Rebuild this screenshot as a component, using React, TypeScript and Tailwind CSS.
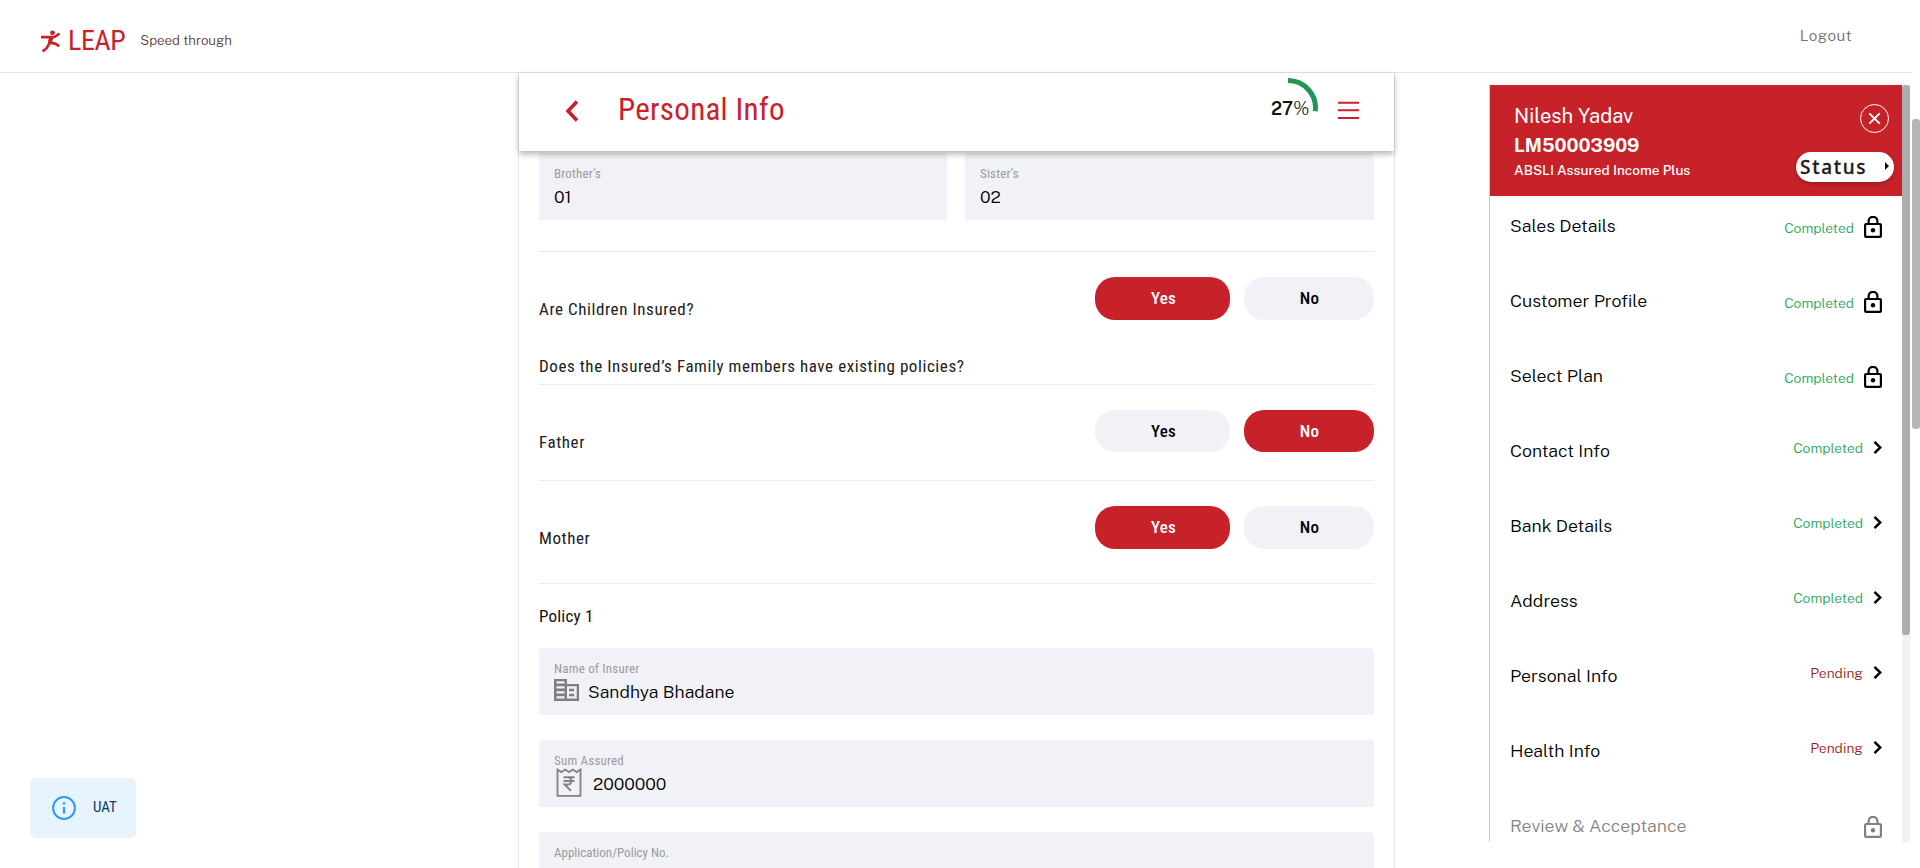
import type { ReactNode } from 'react';

const din = "font-['Roboto_Condensed',Roboto,sans-serif]";
const sans = "font-['Public_Sans',Inter,sans-serif]";

function Lock({ muted }: { muted?: boolean }) {
  return (
    <svg width="18" height="22" viewBox="0 0 18 22" fill="none" className={muted ? 'text-[#808080]' : 'text-black'}>
      <rect x="1.1" y="8" width="15.8" height="12.900" rx="1" stroke="currentColor" strokeWidth="2.200" />
      <path d="M4.6 8V5.2a4.4 4.4 0 0 1 8.8 0V8" stroke="currentColor" strokeWidth="2.200" />
      <circle cx="9" cy="14.3" r="2.2" fill="currentColor" />
    </svg>
  );
}

function Chevron() {
  return (
    <svg width="9" height="13" viewBox="0 0 9 13" fill="none" stroke="#000" strokeWidth="2.5">
      <path d="M1.500 .900l5.800 5.600-5.800 5.600" />
    </svg>
  );
}

function Choice({ value, h }: { value: 'Yes' | 'No'; h: string }) {
  const on = 'bg-[#c7222a] text-white';
  const off = 'bg-[#f1f2f7] text-black';
  return (
    <div className={`flex gap-[14px] text-[17px] font-medium tracking-[0.3px] ${h}`}>
      <button className={`w-[135px] rounded-[20px] pl-[2px] pt-px ${value === 'Yes' ? on : off}`}>Yes</button>
      <button className={`w-[130px] rounded-[20px] pl-px pt-px ${value === 'No' ? on : off}`}>No</button>
    </div>
  );
}

function Question({ label, value, height, btn = 'h-[43px]' }: { label: string; value: 'Yes' | 'No'; height: string; btn?: string }) {
  return (
    <div className={`flex items-start justify-between border-t border-[#ebebeb] pt-[25px] ${height}`}>
      <span className="pt-[22px] text-[17px] leading-[20px] tracking-[0.58px] text-[#212121]">{label}</span>
      <Choice value={value} h={btn} />
    </div>
  );
}

function Field({ label, value, icon, width, tight }: { label: string; value?: string; icon?: ReactNode; width: string; tight?: boolean }) {
  return (
    <div className={`flex h-[67px] flex-col rounded-t-[4px] bg-[#f1f2f7] pl-[15px] pt-[13px] ${width}`}>
      <span className={`h-[16px] text-[13px] leading-[16px] text-[#9b9b9b] ${tight ? 'tracking-normal' : 'tracking-[0.2px]'}`}>{label}</span>
      <div className="flex h-[30px] items-start">
        {icon}
        <span className={`pt-[4px] text-[17.6px] font-[360] leading-[21px] text-black ${sans}`}>{value}</span>
      </div>
    </div>
  );
}

function Building() {
  return (
    <svg width="25" height="22" viewBox="0 0 25 22" className="mr-[9px] mt-[2px]">
      <path fill="#7d807f" d="M0 0h13v5h12v17H0z" />
      <path fill="#f1f2f7" d="M2.500 2.200h8v2.300h-8zM2.500 7.200h8v2.300h-8zM2.500 12.200h8v2.300h-8zM2.500 17.200h8v2.300h-8zM13 7.300h9.700v12.300H13z" />
      <path fill="#7d807f" d="M15 9.800h5.200v2.400H15zM15 14.800h5.200v2.400H15z" />
    </svg>
  );
}

function Receipt() {
  return (
    <svg width="26" height="30" viewBox="0 0 26 30" className="ml-[2px] mr-[11px] mt-[-1px]" fill="none" stroke="#808285" strokeWidth="1.8">
      <path d="M1.500 1.500v26.300h23V1.500l-3.800 2.600-3.900-2.600L13 4.100 9.200 1.500 5.400 4.100z" />
      <path d="M7.500 9.300h11M7.500 13h11M8 9.300h3.500c5 0 5 7.200 0 7.200H8.500l6.500 6.300" strokeWidth="1.900" />
    </svg>
  );
}

type Step = { name: string; status?: string; icon: 'lock' | 'arrow' };
const steps: Step[] = [
  { name: 'Sales Details', status: 'Completed', icon: 'lock' },
  { name: 'Customer Profile', status: 'Completed', icon: 'lock' },
  { name: 'Select Plan', status: 'Completed', icon: 'lock' },
  { name: 'Contact Info', status: 'Completed', icon: 'arrow' },
  { name: 'Bank Details', status: 'Completed', icon: 'arrow' },
  { name: 'Address', status: 'Completed', icon: 'arrow' },
  { name: 'Personal Info', status: 'Pending', icon: 'arrow' },
  { name: 'Health Info', status: 'Pending', icon: 'arrow' },
  { name: 'Review & Acceptance', icon: 'lock' },
];

export default function App() {
  return (
    <div className={`relative flex h-[868px] w-[1920px] flex-col overflow-hidden bg-white ${din}`}>
      <header className="flex h-[73px] w-[1912px] shrink-0 items-start border-b border-[#e3e3e8] pl-[40px]">
        <svg width="21" height="23" viewBox="0 0 21 23" className="mt-[30px]" fill="none" stroke="#c7222a">
          <circle cx="12.500" cy="2.800" r="2.400" fill="#c7222a" stroke="none" />
          <path d="M1 7.200h11l2.500-.200 5-3.500M10.500 7l-1.500 6.500c-.800 3-3 6-6.500 7.700M10 12.800c4 0 7 .700 9 3.700M12 8l-2 5" strokeWidth="2.700" />
        </svg>
        <span className="ml-[7px] mt-[25px] text-[28px] leading-[32px] tracking-[-0.4px] text-[#c7222a]">LEAP</span>
        <span className={`ml-[15px] mt-[32px] text-[13.300px] font-[350] leading-[16px] text-[#5d3a38] ${sans}`}>Speed through</span>
        <span className={`ml-auto mr-[60px] mt-[26px] text-[15.200px] font-light leading-[20px] tracking-[0.5px] text-[#6f6f6f] ${sans}`}>Logout</span>
      </header>

      <div className="flex min-h-0 flex-1 items-start">
        <main className="ml-[518px] h-full w-[877px] shrink-0 border-x border-[#e8e8e8]">
          <div className="relative z-10 flex h-[78px] items-start bg-white shadow-[0_3px_6px_rgba(0,0,0,0.3)]">
            <svg width="14" height="22" viewBox="0 0 14 22" className="ml-[46px] mt-[27px]" fill="none" stroke="#c7222a" strokeWidth="3.600">
              <path d="M12 1.500l-9 9.500 9 9.500" />
            </svg>
            <h1 className="ml-[39px] mt-[19px] text-[31px] leading-[36px] tracking-[0.300px] text-[#c7222a]">Personal Info</h1>
            <div className="relative ml-auto h-[60px] w-[60px] pt-[25px]">
              <svg width="60" height="60" viewBox="0 0 60 60" className="absolute left-0 top-[5px]" fill="none" stroke="#219653" strokeWidth="5">
                <path d="M30 2.500A27.500 27.500 0 0 1 57.300 33.300" />
              </svg>
              <p className={`ml-[13px] text-[18px] font-[350] leading-[22px] text-[#111] ${sans}`}>
                <span className="font-semibold">27</span>%
              </p>
            </div>
            <svg width="21" height="18" viewBox="0 0 21 18" className="ml-[20px] mr-[35px] mt-[28px]" stroke="#c7222a" strokeWidth="2">
              <path d="M0 1.700h21M0 9.300h21M0 17h21" />
            </svg>
          </div>

          <div className="flex flex-col pl-[20px] pr-[20px] pt-[2px]">
            <div className="flex justify-between">
              <Field label="Brother's" value="01" width="w-[408px]" />
              <Field label="Sister's" value="02" width="w-[409px]" />
            </div>
            <div className="h-[31px]" />
            <Question label="Are Children Insured?" value="Yes" height="h-[105px]" />
            <p className="h-[28px] text-[17px] leading-[20px] tracking-[0.580px] text-[#212121]">
              Does the Insured’s Family members have existing policies?
            </p>
            <Question label="Father" value="No" height="h-[96px]" btn="h-[42px]" />
            <Question label="Mother" value="Yes" height="h-[103px]" />
            <p className="h-[65px] border-t border-[#ebebeb] pt-[22px] text-[17px] leading-[20px] tracking-[0.200px] text-[#111]">Policy 1</p>
            <div className="flex flex-col gap-[25px]">
              <Field label="Name of Insurer" value="Sandhya Bhadane" icon={<Building />} width="w-full" />
              <Field label="Sum Assured" value="2000000" icon={<Receipt />} width="w-full" />
              <Field label="Application/Policy No." width="w-full" tight />
            </div>
          </div>
        </main>

        <aside className={`ml-[94px] mt-[12px] flex h-[757px] w-[421px] shrink-0 overflow-hidden border-l border-[#ccc] ${sans}`}>
          <div className="w-[412px] shrink-0">
            <div className="flex h-[111px] justify-between bg-[#c7222a] pl-[24px] text-white">
              <div className="flex flex-col whitespace-nowrap pt-[19px]">
                <span className="text-[20.200px] leading-[24px]">Nilesh Yadav</span>
                <span className="mt-[5px] text-[18.700px] font-bold leading-[24px]">LM50003909</span>
                <span className="mt-[4px] text-[13.600px] font-medium leading-[18px]">ABSLI Assured Income Plus</span>
              </div>
              <div className="flex flex-col items-end pt-[19px]">
                <svg width="29" height="29" viewBox="0 0 29 29" className="mr-[13px]" fill="none" stroke="#fff">
                  <circle cx="14.500" cy="14.500" r="14" />
                  <path d="M9.300 9.300l10.400 10.400M19.700 9.300L9.300 19.700" strokeWidth="1.900" />
                </svg>
                <button className="mr-[8px] mt-[19px] flex h-[30px] w-[98px] items-center rounded-full bg-white pl-[4px] font-['Noto_Sans',sans-serif] text-[19px] font-medium leading-[28px] tracking-[1.700px] text-[#1c1c1c] [-webkit-text-stroke:0.300px_#1c1c1c] shadow-[0_2px_4px_rgba(0,0,0,0.25)]">
                  Status
                  <svg width="4" height="8" viewBox="0 0 4 8" className="mb-[3px] ml-auto mr-[5px]" fill="#111">
                    <path d="M0 0l4 4-4 4z" />
                  </svg>
                </button>
              </div>
            </div>
            {steps.map((s) => (
              <div key={s.name} className={`flex h-[75px] items-start justify-between pl-[20px] pr-[20px] text-[17.700px] font-[360] leading-[22px] ${s.status ? 'text-black' : 'text-[#858585]'}`}>
                <span className="pt-[19px]">{s.name}</span>
                {s.icon === 'lock' ? (
                  <div className="flex items-start gap-[10px] pt-[20px]">
                    <span className="pt-[3px] text-[13.900px] leading-[18px] text-[#27a659]">{s.status}</span>
                    <Lock muted={!s.status} />
                  </div>
                ) : (
                  <div className="flex items-start gap-[10px] pt-[18px]">
                    <span className={`text-[13.900px] leading-[18px] ${s.status === 'Pending' ? 'text-[#971c1c]' : 'text-[#27a659]'}`}>{s.status}</span>
                    <span className="pt-[2px]"><Chevron /></span>
                  </div>
                )}
              </div>
            ))}
          </div>
          <div className="h-full w-[8px] bg-[#f1f2f7]">
            <div className="h-[550px] rounded-[3px] bg-[#adadb1]" />
          </div>
        </aside>
      </div>

      <div className="absolute bottom-[30px] left-[30px] flex h-[60px] w-[106px] items-center rounded-[5px] bg-[#e7f3fd] pl-[22px]">
        <svg width="24" height="24" viewBox="0 0 24 24" fill="none" stroke="#2f9df4" strokeWidth="2">
          <circle cx="12" cy="12" r="10.900" />
          <path d="M12 11v6.500M12 6.200v2.400" strokeWidth="2.200" />
        </svg>
        <span className="ml-[17px] pb-[2px] text-[15px] leading-[18px] text-[#0d3c61]">UAT</span>
      </div>
      <div className="absolute right-0 top-[119px] h-[310px] w-[8px] rounded-[3px] bg-[#b5b5b5]" />
    </div>
  );
}
